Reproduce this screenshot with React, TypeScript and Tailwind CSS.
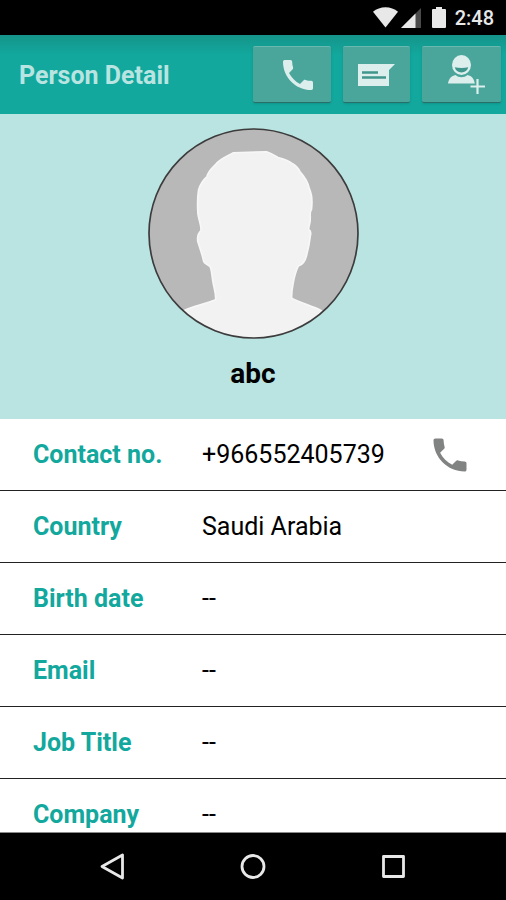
import React from 'react';

const details = [
  { label: 'Contact no.', value: '+966552405739', callable: true },
  { label: 'Country', value: 'Saudi Arabia' },
  { label: 'Birth date', value: '--' },
  { label: 'Email', value: '--' },
  { label: 'Job Title', value: '--' },
  { label: 'Company', value: '--' },
];

function PhoneIcon({ className }: { className?: string }) {
  return (
    <svg viewBox="0 0 24 24" fill="currentColor" className={className} aria-hidden="true">
      <path d="M6.62 10.79c1.44 2.83 3.76 5.14 6.59 6.59l2.2-2.2c.27-.27.67-.36 1.02-.24 1.12.37 2.33.57 3.57.57.55 0 1 .45 1 1V20c0 .55-.45 1-1 1-9.39 0-17-7.61-17-17 0-.55.45-1 1-1h3.5c.55 0 1 .45 1 1 0 1.25.2 2.45.57 3.57.11.35.03.74-.25 1.02l-2.2 2.2z" />
    </svg>
  );
}

function StatusBar() {
  return (
    <div className="flex h-[35px] shrink-0 items-center justify-end bg-black pr-3 text-[#e8e8e8]">
      <svg viewBox="0 0 25 21" className="h-[21px] w-[25px]" fill="currentColor" aria-hidden="true">
        <path d="M0 4.8C3.5 1.8 7.8 0.3 12.5 0.3S21.5 1.8 25 4.8L12.5 20.5z" />
      </svg>
      <svg viewBox="0 0 20 20" className="ml-[3px] h-5 w-5" fill="currentColor" aria-hidden="true">
        <path d="M0 20L20 0v20z" fill="#4a4a4a" />
        <path d="M0 20L14.5 5.5V20z" />
      </svg>
      <svg viewBox="0 0 14 21" className="ml-[11px] h-[21px] w-[14px]" fill="currentColor" aria-hidden="true">
        <path d="M4 0h6v2h3a1 1 0 0 1 1 1v17a1 1 0 0 1-1 1H1a1 1 0 0 1-1-1V3a1 1 0 0 1 1-1h3z" />
      </svg>
      <span className="ml-[9px] text-xl leading-6 font-medium">2:48</span>
    </div>
  );
}

function Header() {
  const button =
    'flex h-[57px] shrink-0 items-center rounded-[2px] border-t border-b border-t-[#6ab9b0] border-b-[#276f68] bg-[#4aa59b] text-[#dcefed] shadow-sm';

  return (
    <header className="flex h-[79px] shrink-0 items-center justify-between bg-[#12a89d] bg-linear-to-b from-[#15948a] to-[#12a89d] to-25% pr-[5px] pl-[19px]">
      <h1 className="pt-0.5 text-[25px] leading-8 font-bold text-[#b9e4e1]">Person Detail</h1>
      <div className="flex gap-3">
        <button type="button" aria-label="Call" className={`${button} w-[78px] justify-end pr-[13px]`}>
          <PhoneIcon className="h-10 w-10" />
        </button>
        <button type="button" aria-label="Message" className={`${button} w-[67px] justify-center`}>
          <svg viewBox="0 0 37 22" className="h-[22px] w-[37px]" aria-hidden="true">
            <path d="M0 0h37l-6 6v16H0z" fill="currentColor" />
            <path d="M4 8.5h16M4 13.5h24" stroke="#3f968d" strokeWidth="2.4" />
          </svg>
        </button>
        <button type="button" aria-label="Add contact" className={`${button} w-[79px] justify-end pr-4`}>
          <svg viewBox="0 0 37 39" className="h-[39px] w-[37px]" aria-hidden="true">
            <ellipse cx="13.5" cy="10" rx="9.5" ry="10" fill="currentColor" />
            <path d="M6.8 12.3c4 .9 9.400 .9 13.4 0-.7 3.300-3.200 5.200-6.700 5.200s-6-1.900-6.700-5.200z" fill="#3f968d" />
            <path d="M0 28.500c.6-4.500 3.500-7.700 7.500-8.500 3.500 3 8.500 3 12 0 4.200.8 6.700 4 7.300 8.500z" fill="currentColor" />
            <path d="M29.500 24V39M22.500 31.500H37" stroke="currentColor" strokeWidth="2.200" />
          </svg>
        </button>
      </div>
    </header>
  );
}

function Avatar() {
  return (
    <svg viewBox="0 0 630 630" className="h-[211px] w-[211px]" role="img" aria-label="Profile photo">
      <defs>
        <clipPath id="avatar-clip">
          <circle cx="315" cy="315" r="313" />
        </clipPath>
      </defs>
      <g clipPath="url(#avatar-clip)">
        <rect width="630" height="630" fill="#b8b8b8" />
        <path
          d="M255 74L354 71C370 76 378 82 388 88C410 93 422 99 432 107C444 114 450 122 454 131C468 146 478 164 482 182C489 197 491 220 488 244C481 252 486 262 484 272C486 284 478 294 480 304C486 307 487 312 485 320C482 345 478 365 473 382C469 398 462 408 449 412C440 430 436 448 433 466C430 482 428 494 429 508C450 520 490 532 515 544L630 640H0L110 544C135 532 170 526 202 513C203 495 198 480 195 465C191 445 191 428 186 415C177 406 168 405 166 397C162 378 155 358 149 340C146 325 149 315 158 306C160 290 151 275 149 255C147 225 148 205 151 185C155 170 165 155 176 145C181 125 195 118 205 105C220 90 238 84 255 74Z"
          fill="#f2f2f2"
          stroke="#f7f7f7"
          strokeWidth="5"
          strokeLinejoin="round"
        />
      </g>
      <circle cx="315" cy="315" r="312" fill="none" stroke="#3c3c3c" strokeWidth="5" />
    </svg>
  );
}

function NavigationBar() {
  const button = 'flex h-full w-[140px] items-center justify-center';

  return (
    <nav className="flex h-[68px] shrink-0 justify-center border-t border-[#8a8a8a] bg-black text-[#e8e8e8]">
      <button type="button" aria-label="Back" className={button}>
        <svg viewBox="0 0 28 28" className="h-7 w-7" fill="none" stroke="currentColor" strokeWidth="2.8" strokeLinejoin="round">
          <path d="M23.5 2v23L3 13.500z" />
        </svg>
      </button>
      <button type="button" aria-label="Home" className={button}>
        <svg viewBox="0 0 28 28" className="h-7 w-7" fill="none" stroke="currentColor" strokeWidth="2.8">
          <circle cx="14" cy="13.500" r="11" />
        </svg>
      </button>
      <button type="button" aria-label="Recent apps" className={button}>
        <svg viewBox="0 0 28 28" className="h-7 w-7" fill="none" stroke="currentColor" strokeWidth="2.8" strokeLinejoin="round">
          <rect x="4.500" y="3.500" width="20" height="20" />
        </svg>
      </button>
    </nav>
  );
}

export default function App() {
  return (
    <div className="flex h-screen flex-col overflow-hidden bg-white font-['Roboto',sans-serif]">
      <StatusBar />
      <Header />

      <main className="min-h-0 flex-1 overflow-y-auto [scrollbar-width:none]">
        {/* Profile */}
        <section className="flex flex-col items-center bg-[#b9e4e1] pt-[14px] pb-[27px]">
          <Avatar />
          <h2 className="mt-[17px] text-[28px] leading-9 font-bold text-black">abc</h2>
        </section>

        {/* Contact details */}
        <dl>
          {details.map((item) => (
            <div key={item.label} className="flex h-[72px] items-center border-b border-[#222222] pr-[34px] pl-[33px]">
              <dt className="w-[169px] shrink-0 text-[25px] leading-8 font-bold text-[#12a89d]">{item.label}</dt>
              <dd className="flex flex-1 items-center justify-between text-[25px] leading-8 text-black">
                {item.value}
                {item.callable && (
                  <button type="button" aria-label={`Call ${item.value}`} className="text-[#808381]">
                    <PhoneIcon className="h-11 w-11" />
                  </button>
                )}
              </dd>
            </div>
          ))}
        </dl>
      </main>

      <NavigationBar />
    </div>
  );
}
